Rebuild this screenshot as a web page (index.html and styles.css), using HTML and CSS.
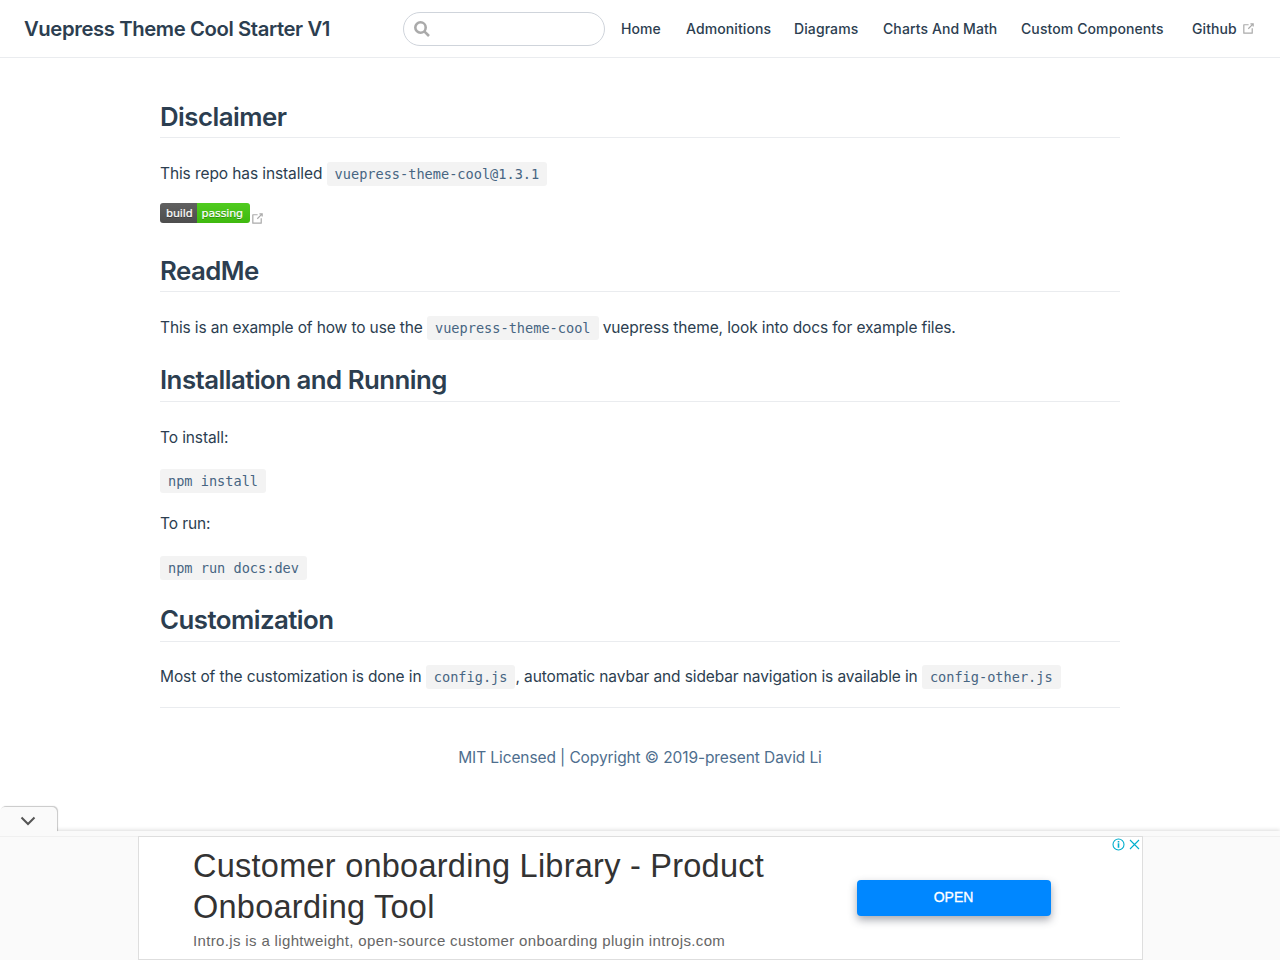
FILE: index.html
```html
<!DOCTYPE html>
<html lang="en">
<head>
<meta charset="utf-8">
<title>Vuepress Theme Cool Starter V1</title>
<link rel="stylesheet" href="styles.css">
</head>
<body>
<svg width="0" height="0" class="defs"><symbol id="outbound" viewBox="0 0 100 100"><path d="M18.8,85.1h56c2.2,0,4-1.8,4-4v-32h-8v28h-48v-48h28v-8h-32c-2.2,0-4,1.8-4,4v56C14.8,83.3,16.6,85.1,18.8,85.1z"/><path d="M45.7,48.7 51.3,54.3 77.2,28.5 77.2,37.2 85.2,37.2 85.2,14.9 62.8,14.9 62.8,22.9 71.5,22.9z"/></symbol></svg>
<header class="navbar">
  <div class="site-name">Vuepress Theme Cool Starter V1</div>
  <div class="search"><svg class="search-icon" viewBox="0 0 16 16"><circle cx="6.5" cy="6.5" r="5.2"/><path d="M10.3 10.3 15 15"/></svg></div>
  <nav class="links">
    <a class="l1">Home</a><a class="l2">Admonitions</a><a class="l3">Diagrams</a><a class="l4">Charts And Math</a><a class="l5">Custom Components</a><a class="l6">Github</a>
    <svg class="outbound"><use href="#outbound"/></svg>
  </nav>
</header>
<main class="content">
  <h2>Disclaimer</h2>
  <p>This repo has installed <code>vuepress-theme-cool@1.3.1</code></p>
  <div class="badge-row"><span class="badge"><span class="build">build</span><span class="passing">passing</span></span><svg class="outbound"><use href="#outbound"/></svg></div>
  <h2 class="readme">ReadMe</h2>
  <p class="example">This is an example of how to use the <code>vuepress-theme-cool</code> vuepress theme, look into docs for example files.</p>
  <h2 class="raised">Installation and Running</h2>
  <p>To install:</p>
  <p class="command"><code>npm install</code></p>
  <p class="run">To run:</p>
  <p class="command second"><code>npm run docs:dev</code></p>
  <h2 class="raised last">Customization</h2>
  <p>Most of the customization is done in <code>config.js</code><span class="rest">, automatic navbar and sidebar navigation is available in <code>config-other.js</code></span></p>
</main>
<footer class="footer">MIT Licensed | Copyright © 2019-present David Li</footer>
<aside class="ad-bar">
  <div class="ad-tab"><svg viewBox="0 0 16 10"><path d="M1.5 1.5 8 8l6.5-6.5"/></svg></div>
  <div class="ad-body">
    <div class="ad">
      <div class="ad-copy">
        <div class="ad-title">Customer onboarding Library - Product<br>Onboarding Tool</div>
        <div class="ad-text">Intro.js is a lightweight, open-source customer onboarding plugin introjs.com</div>
      </div>
      <div class="open">OPEN</div>
      <div class="choices">
        <svg viewBox="0 0 13 13"><circle cx="6.5" cy="6.5" r="5.5"/><path class="info" d="M6.5 5.3v4.5M6.5 3v1.4"/></svg>
        <svg viewBox="0 0 13 13"><path d="M2 2l9 9M11 2l-9 9"/></svg>
      </div>
    </div>
  </div>
</aside>
</body>
</html>
```
FILE: styles.css
```css
* { box-sizing: border-box; }
body { margin: 0; height: 960px; overflow: hidden; display: flex; flex-direction: column; background: #fff; color: #2c3e50; font: 15.5px/27px Inter, sans-serif; letter-spacing: -0.1px; }
.defs { position: absolute; }
.navbar { height: 58px; flex: none; display: flex; align-items: center; padding: 0 0 0 24px; border-bottom: 1px solid #eaecef; white-space: nowrap; }
.site-name { flex: none; width: 379px; font-size: 20.3px; font-weight: 600; letter-spacing: -0.4px; }
.search { flex: none; width: 202px; height: 34px; border: 1px solid #cfd4db; border-radius: 17px; padding: 8px 10px; }
.search-icon { display: block; width: 16px; height: 16px; fill: none; stroke: #aaa; stroke-width: 2.6; }
.links { display: flex; align-items: center; margin-left: 16px; font-size: 14px; font-weight: 500; letter-spacing: 0.1px; }
.links a { flex: none; }
.l1 { width: 65px; }
.l2 { width: 108px; }
.l3 { width: 89px; }
.l4 { width: 138px; }
.l5 { width: 171px; }
.l6 { width: 49px; }
.outbound { width: 15px; height: 15px; fill: #aaa; flex: none; }
.content { width: 960px; margin: 41px auto 0; flex: none; border-bottom: 1px solid #eaecef; height: 609px; }
h2 { margin: 0 0 22px; height: 39px; font-size: 25.8px; line-height: 35px; font-weight: 600; letter-spacing: -0.52px; border-bottom: 1px solid #eaecef; }
h2.raised { line-height: 33px; }
h2.last { margin-bottom: 21px; }
p { margin: 0; height: 27px; white-space: nowrap; }
p + h2 { margin-top: 22px; }
.example { letter-spacing: -0.125px; }
.rest { letter-spacing: -0.115px; }
code { font: 13.6px "DejaVu Sans Mono", monospace; letter-spacing: 0; color: #476582; background: #f3f3f3; border-radius: 3px; padding: 4px 8px; }
.badge-row { margin-top: 16px; height: 27px; display: flex; }
.badge { display: flex; width: 90px; height: 20px; border-radius: 3px; overflow: hidden; color: #fff; font: 11px/21px "DejaVu Sans", sans-serif; text-shadow: 0 1px 0 rgba(1, 1, 1, 0.3); -webkit-text-stroke: 0.2px #fff; }
.build { width: 37px; padding-left: 6px; background: linear-gradient(#606060, #4d4d4d); }
.passing { flex: 1; padding-left: 4.5px; background: linear-gradient(#50cb20, #3fb90f); }
.badge-row .outbound { margin: 8px 0 0; }
.readme { margin-top: 23px; }
.command { margin-top: 16px; }
.run { margin-top: 16px; }
.second { margin-top: 17px; }
.second + h2 { margin-top: 22px; }
.footer { flex: none; margin-top: 36px; text-align: center; color: #4e6e8e; }
.ad-bar { position: absolute; left: 0; top: 831px; width: 1280px; height: 129px; background: #fafafa; box-shadow: 0 -1px 4px rgba(0, 0, 0, 0.14); padding-top: 5px; }
.ad-body { height: 124px; display: flex; justify-content: center; border-top: 1px solid #f0f0f0; }
.ad-tab { position: absolute; left: 0; top: -24px; width: 57px; height: 25px; background: #fafafa; border-radius: 5px 5px 0 0; box-shadow: 1px -1px 1px rgba(0, 0, 0, 0.22); display: flex; justify-content: center; padding: 9px 1px 0 0; }
.ad-tab svg { width: 16px; height: 10px; fill: none; stroke: #555; stroke-width: 2; }
.ad { position: relative; width: 1005px; height: 124px; margin-top: -1px; background: #fff; border: 1px solid #dedede; display: flex; font-family: "Liberation Sans", Arial, sans-serif; letter-spacing: 0; }
.ad-copy { width: 718px; padding: 9px 0 0 54.5px; white-space: nowrap; }
.ad-title { color: #333; font-size: 32.5px; line-height: 41px; letter-spacing: 0.25px; }
.ad-text { color: #666; font-size: 15px; line-height: 22px; margin-top: 2px; letter-spacing: 0.35px; }
.open { width: 194px; height: 36px; margin-top: 43px; border-radius: 4px; background: #0087ff; color: #fff; font-size: 14px; line-height: 35px; text-align: center; box-shadow: 0 4px 9px rgba(60, 64, 80, 0.45); -webkit-text-stroke: 0.3px #fff; }
.choices { position: absolute; right: 1px; top: 1px; display: flex; gap: 3px; }
.choices svg { width: 13px; height: 13px; fill: none; stroke: #00aecd; stroke-width: 1.1; }
.choices .info { stroke-width: 1.6; }
```
